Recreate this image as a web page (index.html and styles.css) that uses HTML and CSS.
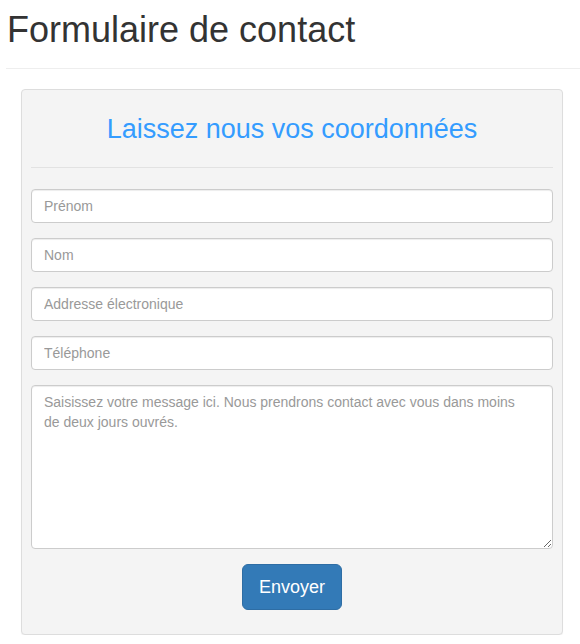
FILE: index.html
```html
<!DOCTYPE html>
<html lang="fr">
<head>
<meta charset="utf-8">
<title>Formulaire de contact</title>
<link rel="stylesheet" href="styles.css">
</head>
<body>
<div class="page">
  <h1 class="page-title">Formulaire de contact</h1>
  <hr class="page-rule">
  <div class="panel">
    <h2 class="panel-title">Laissez nous vos coordonnées</h2>
    <hr class="panel-rule">
    <form class="form">
      <input class="field" type="text" placeholder="Prénom">
      <input class="field" type="text" placeholder="Nom">
      <input class="field" type="email" placeholder="Addresse électronique">
      <input class="field" type="tel" placeholder="Téléphone">
      <textarea class="field field-area" placeholder="Saisissez votre message ici. Nous prendrons contact avec vous dans moins&#10;de deux jours ouvrés."></textarea>
      <div class="actions">
        <button class="btn" type="button">Envoyer</button>
      </div>
    </form>
  </div>
</div>
</body>
</html>
```
FILE: styles.css
```css
* { box-sizing: border-box; }
html, body { margin: 0; padding: 0; background: #fff; }
body {
  font-family: "Liberation Sans", Arial, Helvetica, sans-serif;
  font-size: 14px;
  line-height: 20px;
  color: #333;
}
.page { padding: 0 0 0 6px; }
.page-title {
  margin: 10px 0 0 1px;
  font-size: 36px;
  line-height: 40px;
  font-weight: 500;
  color: #333;
}
.page-rule {
  margin: 18px 0 0 0;
  border: 0;
  border-top: 1px solid #eee;
  height: 0;
}
.panel {
  margin: 20px 0 0 15px;
  width: 542px;
  background: #f4f4f4;
  border: 1px solid #ddd;
  border-radius: 4px;
  padding: 9px;
  box-shadow: 0 1px 1px rgba(0,0,0,.05);
}
.panel-title {
  margin: 15px 0 0 0;
  font-size: 27px;
  line-height: 30px;
  font-weight: 500;
  text-align: center;
  color: #349cff;
}
.panel-rule {
  margin: 23px 0 0 0;
  border: 0;
  border-top: 1px solid #e2e2e2;
  height: 0;
}
.form {
  margin: 21px 0 15px 0;
  display: flex;
  flex-direction: column;
  gap: 15px;
}
.field {
  display: block;
  width: 100%;
  height: 34px;
  margin: 0;
  padding: 6px 12px;
  font-family: "Liberation Sans", Arial, Helvetica, sans-serif;
  font-size: 14px;
  line-height: 20px;
  color: #555;
  background: #fff;
  border: 1px solid #ccc;
  border-radius: 4px;
  box-shadow: inset 0 1px 1px rgba(0,0,0,.075);
  outline: none;
}
.field::placeholder { color: #999; opacity: 1; }
.field-area {
  height: 164px;
  resize: vertical;
}
.actions {
  display: flex;
  justify-content: center;
}
.btn {
  height: 46px;
  padding: 10px 16px;
  font-family: "Liberation Sans", Arial, Helvetica, sans-serif;
  font-size: 18px;
  line-height: 24px;
  color: #fff;
  background: #337ab7;
  border: 1px solid #2e6da4;
  border-radius: 6px;
  cursor: pointer;
}
```
